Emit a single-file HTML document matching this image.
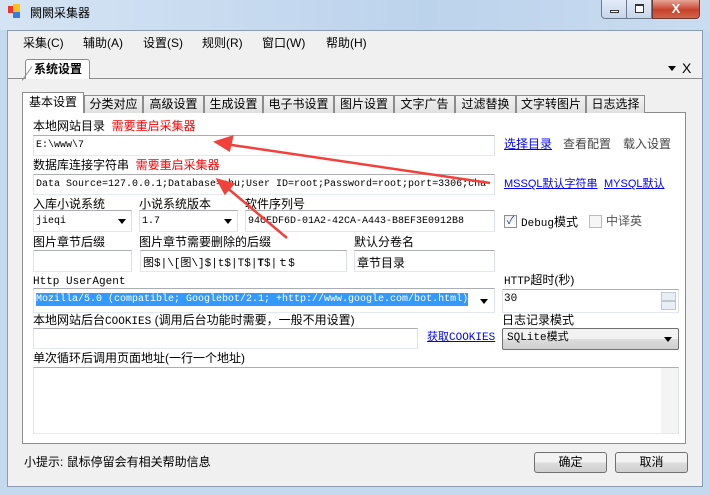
<!DOCTYPE html>
<html><head><meta charset="utf-8"><style>
*{box-sizing:border-box;margin:0;padding:0}
body{width:710px;height:495px;overflow:hidden;background:#c4d8ee;font-family:"Liberation Sans","Noto Sans CJK SC",sans-serif;font-size:12px;color:#000;position:relative}
.a{position:absolute;white-space:nowrap}
.t{line-height:14px}
.in{position:absolute;background:#fff;border:1px solid #abadb3;border-color:#abadb3 #dbdfe6 #e3e9ef #e2e3ea;white-space:nowrap;overflow:hidden}
.mono{font-family:"Liberation Mono","Noto Sans CJK SC",monospace;font-size:10px}
.tab{position:absolute;top:95px;height:18px;border:1px solid #8c8c8c;border-bottom:none;background:linear-gradient(#f2f2f2,#e0e0e0);text-align:center;line-height:16px;font-size:12px}
.red{color:#f00}
.lnk{color:#00f;text-decoration:underline}
.btn{position:absolute;border:1px solid #707070;border-radius:3px;background:linear-gradient(#f2f2f2 50%,#dddddd 50%,#cfcfcf);text-align:center;line-height:19px;white-space:nowrap}
.arr{position:absolute;right:5px;top:50%;margin-top:-2px;border-left:4px solid transparent;border-right:4px solid transparent;border-top:5px solid #000}
</style></head><body>
<div class="a" style="left:0;top:0;width:710px;height:30px;background:linear-gradient(90deg,#d5e4f4,#bcd3ec 60%,#c9dcf0)"></div>
<div class="a" style="left:8px;top:6px;width:7px;height:7px;background:#e33"></div>
<div class="a" style="left:13px;top:4px;width:7px;height:8px;background:#f7c21b"></div>
<div class="a" style="left:13px;top:12px;width:7px;height:6px;background:#3a7be0"></div>
<div class="a t" style="left:30px;top:6px;font-size:12px">闕闕采集器</div>
<div class="a" style="left:601px;top:0;width:26px;height:19px;border:1px solid #6d7b8f;border-top:none;border-radius:0 0 0 4px;background:linear-gradient(#e3ecf7,#c6d6ea)"><div class="a" style="left:8px;top:10px;width:9px;height:3px;border:1px solid #333;background:#fff"></div></div>
<div class="a" style="left:627px;top:0;width:25px;height:19px;border:1px solid #6d7b8f;border-top:none;border-left:none;background:linear-gradient(#e3ecf7,#c6d6ea)"><div class="a" style="left:8px;top:4px;width:9px;height:9px;border:1px solid #333;border-top-width:2px;background:#fff"></div></div>
<div class="a" style="left:652px;top:0;width:48px;height:19px;border:1px solid #6d3a33;border-top:none;border-radius:0 0 4px 0;background:linear-gradient(#e8a596,#c7422c 55%,#d2644a);color:#fff;font-weight:bold;text-align:center;line-height:17px;font-size:13px">X</div>
<div class="a" style="left:7px;top:30px;width:696px;height:457px;background:#f0f0f0;border:1px solid #8a9bb2"></div>
<div class="a t" style="left:23px;top:36px">采集(C)</div>
<div class="a t" style="left:83px;top:36px">辅助(A)</div>
<div class="a t" style="left:143px;top:36px">设置(S)</div>
<div class="a t" style="left:202px;top:36px">规则(R)</div>
<div class="a t" style="left:262px;top:36px">窗口(W)</div>
<div class="a t" style="left:326px;top:36px">帮助(H)</div>
<div class="a" style="left:8px;top:78px;width:694px;height:1px;background:#8c8c8c"></div>
<div class="a" style="left:25px;top:59px;width:65px;height:20px;border:1px solid #8c8c8c;border-bottom:none;border-radius:3px 3px 0 0;background:#fff"></div>
<div class="a" style="left:15px;top:66px;width:17px;height:1px;background:#8c8c8c;transform:rotate(-55deg);transform-origin:right"></div>
<div class="a t" style="left:34px;top:62px;font-weight:bold">系统设置</div>
<div class="a" style="left:668px;top:66px;border-left:4px solid transparent;border-right:4px solid transparent;border-top:5px solid #000"></div>
<div class="a" style="left:682px;top:60px;font-size:14px">X</div>
<div class="a" style="left:22px;top:112px;width:664px;height:332px;border:1px solid #8c8c8c;background:#fff"></div>
<div class="tab" style="left:84px;width:59px">分类对应</div>
<div class="tab" style="left:143px;width:61px">高级设置</div>
<div class="tab" style="left:204px;width:59px">生成设置</div>
<div class="tab" style="left:263px;width:71px">电子书设置</div>
<div class="tab" style="left:334px;width:60px">图片设置</div>
<div class="tab" style="left:394px;width:61px">文字广告</div>
<div class="tab" style="left:455px;width:61px">过滤替换</div>
<div class="tab" style="left:516px;width:70px">文字转图片</div>
<div class="tab" style="left:586px;width:59px">日志选择</div>
<div class="tab" style="left:22px;top:92px;width:62px;height:21px;background:#fff;border-color:#8c8c8c;line-height:19px">基本设置</div>
<div class="a t" style="left:33px;top:119px">本地网站目录 <span class="red">&nbsp;需要重启采集器</span></div>
<div class="in mono" style="left:33px;top:135px;width:462px;height:21px;padding:4px 2px">E:\www\7</div>
<div class="a t lnk" style="left:504px;top:137px">选择目录</div>
<div class="a t" style="left:563px;top:137px;color:#444">查看配置</div>
<div class="a t" style="left:623px;top:137px;color:#444">载入设置</div>
<div class="a t" style="left:33px;top:158px">数据库连接字符串 <span class="red">&nbsp;需要重启采集器</span></div>
<div class="in mono" style="left:33px;top:174px;width:462px;height:21px;padding:4px 2px">Data Source=127.0.0.1;Database=shu;User ID=root;Password=root;port=3306;cha</div>
<div class="a t lnk" style="left:504px;top:177px;font-size:11px">MSSQL默认字符串</div>
<div class="a t lnk" style="left:604px;top:177px;font-size:11px">MYSQL默认</div>
<div class="a t" style="left:33px;top:197px">入库小说系统</div>
<div class="a t" style="left:139px;top:197px">小说系统版本</div>
<div class="a t" style="left:245px;top:197px">软件序列号</div>
<div class="in mono" style="left:33px;top:210px;width:99px;height:22px;padding:5px 2px">jieqi<div class="arr"></div></div>
<div class="in mono" style="left:139px;top:210px;width:99px;height:22px;padding:5px 2px">1.7<div class="arr"></div></div>
<div class="in mono" style="left:245px;top:210px;width:250px;height:22px;padding:5px 2px">94CEDF6D-01A2-42CA-A443-B8EF3E0912B8</div>
<div class="a" style="left:504px;top:215px;width:13px;height:13px;border:1px solid #8e8f8f;background:linear-gradient(#eee,#fff);color:#2a4e90;font-size:11px;line-height:11px;text-align:center">✓</div>
<div class="a t" style="left:521px;top:215px"><span class="mono" style="font-size:11px">Debug</span>模式</div>
<div class="a" style="left:589px;top:215px;width:13px;height:13px;border:1px solid #bbb;background:#f6f6f6"></div>
<div class="a t" style="left:606px;top:214px;color:#555">中译英</div>
<div class="a t" style="left:33px;top:235px">图片章节后缀</div>
<div class="a t" style="left:139px;top:235px">图片章节需要删除的后缀</div>
<div class="a t" style="left:354px;top:235px">默认分卷名</div>
<div class="in" style="left:33px;top:250px;width:99px;height:22px"></div>
<div class="in mono" style="left:140px;top:250px;width:207px;height:22px;padding:3px 2px;font-size:11px">图$|\[图\]$|t$|T$|<b>T</b>$|ｔ$</div>
<div class="in" style="left:354px;top:250px;width:141px;height:22px;padding:3px 2px">章节目录</div>
<div class="a t mono" style="left:33px;top:275px;font-size:11px">Http UserAgent</div>
<div class="a t" style="left:504px;top:273px"><span class="mono" style="font-size:11px">HTTP</span>超时(秒)</div>
<div class="in mono" style="left:33px;top:288px;width:462px;height:25px;padding:5px 2px"><span style="background:#3399ff;color:#fff;padding:1px 0">Mozilla/5.0 (compatible; Googlebot/2.1; +http://www.google.com/bot.html)</span><div class="arr" style="right:6px"></div></div>
<div class="in mono" style="left:502px;top:289px;width:177px;height:24px;padding:3px 1px;font-size:11px">30
<div class="a" style="right:2px;top:2px;width:15px;height:9px;border:1px solid #c0c8d2;background:#e8eef5"></div>
<div class="a" style="right:2px;top:11px;width:15px;height:9px;border:1px solid #c0c8d2;background:#e8eef5"></div></div>
<div class="a t" style="left:33px;top:313px">本地网站后台<span class="mono" style="font-size:11px">COOKIES</span> (调用后台功能时需要，一般不用设置)</div>
<div class="a t" style="left:502px;top:313px">日志记录模式</div>
<div class="in" style="left:33px;top:328px;width:385px;height:21px"></div>
<div class="a t lnk" style="left:427px;top:330px;font-size:11px">获取<span class="mono" style="font-size:11px">COOKIES</span></div>
<div class="btn mono" style="left:502px;top:328px;width:177px;height:22px;text-align:left;padding-left:4px;border-radius:2px;font-size:11px">SQLite模式<div class="arr" style="right:6px"></div></div>
<div class="a t" style="left:33px;top:351px">单次循环后调用页面地址(一行一个地址)</div>
<div class="in" style="left:33px;top:367px;width:646px;height:67px"><div class="a" style="right:0;top:0;width:17px;height:65px;background:#f4f4f4"></div></div>
<div class="a t" style="left:24px;top:455px">小提示: 鼠标停留会有相关帮助信息</div>
<div class="btn" style="left:534px;top:452px;width:73px;height:21px">确定</div>
<div class="btn" style="left:615px;top:452px;width:73px;height:21px">取消</div>
<svg class="a" style="left:0;top:0" width="710" height="495">
<g stroke="#f2413a" stroke-width="2.5" fill="#f2413a">
<line x1="490" y1="183" x2="225" y2="144"/>
<polygon points="216,142 232,137 229,150"/>
<line x1="287" y1="238" x2="225" y2="186"/>
<polygon points="218,180 233,184 225,193"/>
</g></svg>
</body></html>
